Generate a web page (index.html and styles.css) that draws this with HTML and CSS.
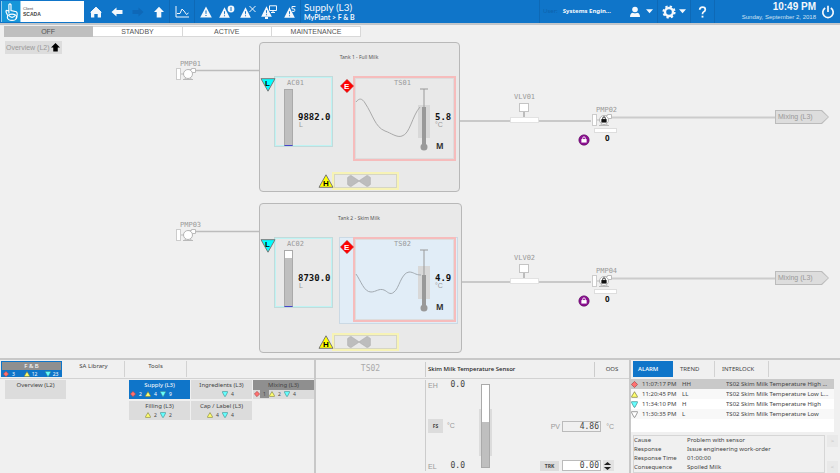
FILE: index.html
```html
<!DOCTYPE html>
<html lang="en">
<head>
<meta charset="utf-8">
<title>Supply (L3)</title>
<link rel="stylesheet" href="styles.css">
</head>
<body>
<svg class="defs" aria-hidden="true">
  <symbol id="hi" viewBox="0 0 10 10"><path d="M5 .6 9.4 5 5 9.4 .6 5z" fill="#ff7070" stroke="#a04848"/></symbol>
  <symbol id="mid" viewBox="0 0 10 10"><path d="M5 1 9 7.6V9H1V7.6z" fill="#ffff70" stroke="#77773c"/></symbol>
  <symbol id="low" viewBox="0 0 10 10"><path d="M.8 1h8.4v1.2L5.6 9H4.4L.8 2.2z" fill="#66ffff" stroke="#3c8888"/></symbol>
  <symbol id="off" viewBox="0 0 10 10"><path d="M.8 1h8.4v1.2L5.6 9H4.4L.8 2.2z" fill="#fff" stroke="#777"/></symbol>
  <symbol id="warn" viewBox="0 0 12 12"><path d="M6 .4 11.8 11.600H.2z" fill="#f4f8fc"/><path d="M5.400 4.500h1.200L6.400 8H5.600zM5.400 8.900h1.200v1.100H5.400z" fill="#1173c5"/></symbol>
  <symbol id="pump" viewBox="0 0 21 14">
    <path d="M7 12.500h10M8.500 12.500l2-3M15.500 12.500l-2-3" stroke="#b9b9b9" fill="none"/>
    <rect x=".5" y="1.500" width="4" height="11" fill="#fff" stroke="#ccc"/>
    <path d="M5 7h3" stroke="#bbb"/>
    <path d="M12 2.500h3.500v-1h4v4H16" fill="#fff" stroke="#bbb"/>
    <circle cx="12" cy="7" r="4.500" fill="#fff" stroke="#b5b5b5"/>
  </symbol>
  <symbol id="blades" viewBox="0 0 24 12"><path d="M.6 2.500Q2.500.6 4 .4L12 5.800 20 .4Q21.500.6 23.400 2.500v7Q21.500 11.400 20 11.600L12 6.200 4 11.600Q2.500 11.400.6 9.500z" fill="#bdbdbd" stroke="#a8a8a8" stroke-width=".5"/></symbol>
  <symbol id="lock" viewBox="0 0 8 8"><path d="M2.500 4V2.500a1.500 1.500 0 0 1 3 0V4" fill="none" stroke="currentColor"/><rect x="1" y="3.500" width="6" height="4" fill="currentColor"/></symbol>
  <symbol id="caret" viewBox="0 0 8 5"><path d="M0 0h8L4 4.500z" fill="#f4f8fc"/></symbol>
  <symbol id="shape-l" viewBox="0 0 16 14"><path d="M1 .7h14L8 13.200z" fill="#0ff" stroke="#777"/></symbol>
  <symbol id="shape-e" viewBox="0 0 14 14"><path d="M7 .3 13.700 7 7 13.700.3 7z" fill="#f00" stroke="#a55" stroke-width=".5"/></symbol>
  <symbol id="shape-h" viewBox="0 0 16 14"><path d="M8 .8 15 13.300H1z" fill="#ff0" stroke="#777"/></symbol>
</svg>

<header class="topbar">
  <div class="brand">
    <svg class="brand-mark" viewBox="0 0 18 20" aria-hidden="true"><rect width="18" height="20" fill="#1696d9"/><g fill="none" stroke="#fff" stroke-width="1.100"><path d="M7 12V3.500Q8 2 9 3.500V9l5 1.200Q15.500 11 14.500 15l-1 2M7 9.500 4.500 9Q3.500 10 6 14"/><ellipse cx="10" cy="15.500" rx="4.500" ry="3"/><path d="M7 14q3 3 6 0"/></g></svg>
    <p class="brand-name"><span>Client</span><strong>SCADA</strong></p>
  </div>
  <nav class="tools" aria-label="Main">
    <button class="tool" aria-label="Home"><svg viewBox="0 0 12 12"><path d="M6 1 1 6v5.500h3.300V8h3.400v3.500H11V6z" fill="#f4f8fc"/><path d="M.6 6.400 6 1.200l5.400 5.200" stroke="#f4f8fc" fill="none"/></svg></button>
    <button class="tool" aria-label="Back"><svg viewBox="0 0 12 12"><path d="M.5 6 5.500 1.500V4h6v4h-6v2.500z" fill="#f4f8fc"/></svg></button>
    <button class="tool" aria-label="Forward"><svg viewBox="0 0 12 12"><path d="M11.500 6 6.500 1.500V4h-6v4h6v2.500z" fill="#0e68b8"/></svg></button>
    <button class="tool" aria-label="Up"><svg viewBox="0 0 12 12"><path d="M6 .8 11 6H8.300v5.500H3.700V6H1z" fill="#f4f8fc"/></svg></button>
    <button class="tool tool-trend" aria-label="Trends"><svg class="wide" viewBox="0 0 14 12"><path d="M1 0v11h13M2 7.500h3l2-4.500 2 2 2.500 3.500 2-1.500" fill="none" stroke="#f4f8fc"/></svg></button>
    <button class="tool" aria-label="Alarms"><svg viewBox="0 0 12 12"><use href="#warn"/></svg></button>
    <button class="tool" aria-label="Alarm information"><svg class="xwide" viewBox="0 0 16 14"><use href="#warn" x="0" y="2" width="11" height="11"/><circle cx="12" cy="4" r="3.400" fill="#f4f8fc"/><path d="M12 2v4" stroke="#1173c5"/></svg></button>
    <button class="tool" aria-label="Suppressed alarms"><svg class="xwide" viewBox="0 0 16 14"><use href="#warn" x="0" y="2" width="11" height="11"/><path d="m9.500 1 6 6m0-6-6 6" stroke="#f4f8fc"/></svg></button>
    <button class="tool" aria-label="System alarms"><svg class="xwide" viewBox="0 0 16 14"><use href="#warn" x="0" y="1" width="11" height="11"/><path d="M4 13h3" stroke="#f4f8fc" stroke-width="2"/><path d="M8.500 .8h7v4.700h-7zM12 5.500v2M10 7.500h4" fill="none" stroke="#f4f8fc"/></svg></button>
    <button class="tool" aria-label="Alarm priorities"><svg class="xwide" viewBox="0 0 16 14"><use href="#warn" x="2" y="2" width="11" height="11"/><path d="M13.500 1.500H10v2.300q3.500-.5 3 1.700-.5 1.500-3 .8" fill="none" stroke="#f4f8fc"/></svg></button>
  </nav>
  <div class="place"><h1>Supply (L3)</h1><p>MyPlant &gt; F &amp; B</p></div>
  <div class="session">
    <p class="user"><span>User:</span><b>Systems Engin...</b></p>
    <button class="menu menu-user" aria-label="Account"><svg class="i12" viewBox="0 0 12 12"><circle cx="6" cy="3.500" r="2.800" fill="#f4f8fc"/><path d="M1 11Q1 7 4 6.800q2 1 4 0Q11 7 11 11z" fill="#f4f8fc"/></svg><svg class="caret"><use href="#caret"/></svg></button>
    <button class="menu" aria-label="Settings"><svg class="i14" viewBox="0 0 14 14"><circle cx="7" cy="7" r="4" fill="none" stroke="#f4f8fc" stroke-width="2.400"/><circle cx="7" cy="7" r="5.600" fill="none" stroke="#f4f8fc" stroke-width="2" stroke-dasharray="2.300 2.100"/></svg><svg class="caret"><use href="#caret"/></svg></button>
    <button class="menu menu-help" aria-label="Help"><svg class="i14" viewBox="0 0 14 14"><path d="M4 4.500Q4 1.800 7 1.800t3 2.500Q10 6 8 7 7 7.500 7 9.500" fill="none" stroke="#f4f8fc" stroke-width="1.900"/><rect x="6" y="11" width="2" height="2" fill="#f4f8fc"/></svg></button>
    <p class="clock"><time class="time">10:49 PM</time><time class="date">Sunday, September 2, 2018</time></p>
    <button class="menu menu-power" aria-label="Log off"><svg class="i14" viewBox="0 0 14 14"><path d="M4.200 3a5.200 5.200 0 1 0 5.600 0M7 .8V7" fill="none" stroke="#f4f8fc" stroke-width="1.700"/></svg></button>
  </div>
</header>

<main class="process">
  <nav class="modes" aria-label="Mode">
    <button class="mode is-on">OFF</button><button class="mode">STANDBY</button><button class="mode">ACTIVE</button><button class="mode">MAINTENANCE</button>
  </nav>
  <a class="up-link" href="#">Overview (L2)<svg viewBox="0 0 10 10" aria-hidden="true"><path d="M5 0l5 5H7.500v4.500h-5V5H0z"/></svg></a>

  <section class="line line-1" aria-label="Full milk line">
    <svg class="pipes" viewBox="0 0 640 160" aria-hidden="true"><g fill="none" stroke="#bcbcbc" stroke-width="1.500"><path d="M20 28.500H84"/><path d="M283 79h53M362 79h54"/><path d="M435 75.500h165" stroke="#ccc" stroke-width="2"/></g></svg>
    <span class="tag pump-in-tag">PMP01</span>
    <svg class="pump pump-in" aria-hidden="true"><use href="#pump"/></svg>
    <article class="tank">
      <h2>Tank 1 - Full Milk</h2>
      <div class="level">
        <span class="tag">AC01</span>
        <div class="bar"><div class="bar-fill" style="height:100%"></div></div>
        <b class="value">9882.0</b><span class="unit">L</span>
      </div>
      <svg class="flag flag-l" viewBox="0 0 16 14"><use href="#shape-l"/><text x="5" y="8">L</text></svg>
      <div class="sensor">
        <span class="tag">TS01</span>
        <svg class="plot" viewBox="0 0 102 84" aria-hidden="true">
          <rect x="65" y="28" width="12" height="33" fill="#d8d8d8"/>
          <path d="M3 25C6 21 9 21 12 26C20 38 22 50 32 54C38 56 44 61 49 59C57 57 59 39 67 30" fill="none" stroke="#a9a9a9"/>
          <path d="M67 12h8M71 12v20" stroke="#999" fill="none"/><path d="M71 30v40" stroke="#999" stroke-width="4"/><circle cx="71" cy="70" r="3.500" fill="#999"/>
        </svg>
        <b class="value">5.8</b><span class="unit">°C</span><b class="manual">M</b>
      </div>
      <svg class="flag flag-e" viewBox="0 0 14 14"><use href="#shape-e"/><text x="4" y="10">E</text></svg>
      <div class="mixer"><svg aria-hidden="true"><use href="#blades"/></svg></div>
      <svg class="flag flag-h" viewBox="0 0 16 14"><use href="#shape-h"/><text x="5" y="12">H</text></svg>
    </article>
    <span class="tag valve-tag">VLV01</span>
    <svg class="valve" viewBox="0 0 30 20" aria-hidden="true"><path d="M14 9v6" stroke="#888"/><rect x="9.500" y=".5" width="9" height="8" fill="#fff" stroke="#c4c4c4"/><rect x=".5" y="14.500" width="28" height="5" fill="#fff" stroke="#e2e2e2"/></svg>
    <span class="tag pump-out-tag">PMP02</span>
    <svg class="pump pump-out" aria-hidden="true"><use href="#pump"/><use href="#lock" x="8.500" y="3" width="7" height="7"/></svg>
    <svg class="interlock" viewBox="0 0 12 12" aria-hidden="true"><circle cx="6" cy="6" r="5.200" fill="#8b1090" stroke="#5d0a60" stroke-width=".6"/><use href="#lock" x="2.500" y="2" width="7" height="7"/></svg>
    <div class="speed"></div><b class="speed-value">0</b>
    <a class="next" href="#">Mixing (L3)</a>
  </section>

  <section class="line line-2" aria-label="Skim milk line">
    <svg class="pipes" viewBox="0 0 640 160" aria-hidden="true"><g fill="none" stroke="#bcbcbc" stroke-width="1.500"><path d="M20 28.500H84"/><path d="M285 79h51M362 79h54"/><path d="M435 75.500h165" stroke="#ccc" stroke-width="2"/></g></svg>
    <span class="tag pump-in-tag">PMP03</span>
    <svg class="pump pump-in" aria-hidden="true"><use href="#pump"/></svg>
    <article class="tank tank-wide">
      <h2>Tank 2 - Skim Milk</h2>
      <div class="level">
        <span class="tag">AC02</span>
        <div class="bar"><div class="bar-fill" style="height:87%"></div></div>
        <b class="value">8730.0</b><span class="unit">L</span>
      </div>
      <svg class="flag flag-l" viewBox="0 0 16 14"><use href="#shape-l"/><text x="5" y="8">L</text></svg>
      <div class="selection"></div>
      <div class="sensor">
        <span class="tag">TS02</span>
        <svg class="plot" viewBox="0 0 102 84" aria-hidden="true">
          <rect x="65" y="28" width="12" height="33" fill="#d8d8d8"/>
          <path d="M3 36C8 43 11 54 18 54C23 54 26 50 31 52C34 53 37 58 41 54C46 51 48 35 56 34C61 34 62 37 68 37" fill="none" stroke="#a3abb2"/>
          <path d="M67 12h8M71 12v26" stroke="#999" fill="none"/><path d="M71 37v33" stroke="#999" stroke-width="4"/><circle cx="71" cy="70" r="3.500" fill="#999"/>
        </svg>
        <b class="value">4.9</b><span class="unit">°C</span><b class="manual">M</b>
      </div>
      <svg class="flag flag-e" viewBox="0 0 14 14"><use href="#shape-e"/><text x="4" y="10">E</text></svg>
      <div class="mixer"><svg aria-hidden="true"><use href="#blades"/></svg></div>
      <svg class="flag flag-h" viewBox="0 0 16 14"><use href="#shape-h"/><text x="5" y="12">H</text></svg>
    </article>
    <span class="tag valve-tag">VLV02</span>
    <svg class="valve" viewBox="0 0 30 20" aria-hidden="true"><path d="M14 9v6" stroke="#888"/><rect x="9.500" y=".5" width="9" height="8" fill="#fff" stroke="#c4c4c4"/><rect x=".5" y="14.500" width="28" height="5" fill="#fff" stroke="#e2e2e2"/></svg>
    <span class="tag pump-out-tag">PMP04</span>
    <svg class="pump pump-out" aria-hidden="true"><use href="#pump"/><use href="#lock" x="8.500" y="3" width="7" height="7"/></svg>
    <svg class="interlock" viewBox="0 0 12 12" aria-hidden="true"><circle cx="6" cy="6" r="5.200" fill="#8b1090" stroke="#5d0a60" stroke-width=".6"/><use href="#lock" x="2.500" y="2" width="7" height="7"/></svg>
    <div class="speed"></div><b class="speed-value">0</b>
    <a class="next" href="#">Mixing (L3)</a>
  </section>
</main>

<footer class="panels">
  <section class="panel areas">
    <nav class="bar-row area-tabs" aria-label="Areas">
      <button class="area is-current"><span class="area-name">F &amp; B</span><span class="counts"><svg><use href="#hi"/></svg><i>3</i><svg><use href="#mid"/></svg><i>12</i><svg><use href="#low"/></svg><i>23</i></span></button>
      <button class="area">SA Library</button>
      <button class="area">Tools</button>
    </nav>
    <div class="tiles">
      <button class="tile"><span class="tile-name">Overview (L2)</span></button>
      <button class="tile is-current c3"><span class="tile-name">Supply (L3)</span><span class="counts"><svg><use href="#hi"/></svg><i>2</i><svg><use href="#mid"/></svg><i>4</i><svg><use href="#low"/></svg><i>9</i></span></button>
      <button class="tile"><span class="tile-name">Ingredients (L3)</span><span class="counts"><svg class="c-low"><use href="#low"/></svg><i>4</i></span></button>
      <button class="tile is-hot"><span class="tile-name">Mixing (L3)</span><span class="counts"><svg><use href="#hi"/></svg><i class="hot">1</i><svg><use href="#mid"/></svg><i>2</i><svg><use href="#low"/></svg><i>4</i></span></button>
      <button class="tile c3"><span class="tile-name">Filling (L3)</span><span class="counts"><svg class="c-mid"><use href="#mid"/></svg><i>2</i><svg><use href="#low"/></svg><i>2</i></span></button>
      <button class="tile"><span class="tile-name">Cap / Label (L3)</span><span class="counts"><svg class="c-mid"><use href="#mid"/></svg><i>4</i><svg><use href="#low"/></svg><i>4</i></span></button>
    </div>
  </section>

  <section class="panel detail">
    <header class="bar-row detail-head"><span class="detail-tag">TS02</span><h2>Skim Milk Temperature Sensor</h2><span class="oos">OOS</span></header>
    <div class="detail-body">
      <div class="limits">
        <p><span>EH</span><output>0.0</output></p>
        <p><button class="chip">FS</button><span class="dim">°C</span></p>
        <p><span>EL</span><output>0.0</output></p>
      </div>
      <div class="gauge"><div class="gauge-tube"><div class="gauge-fill" style="height:55%"></div></div></div>
      <div class="fields">
        <label class="dim" for="pv">PV</label><input id="pv" value="4.86" readonly><span class="dim">°C</span>
        <button class="chip trk">TRK</button><input class="trk-value" aria-label="Track value" value="0.00"><button class="spin" aria-label="Step"><svg viewBox="0 0 10 10"><path d="M1 4 5 .5 9 4zM1 6l4 3.500L9 6z" fill="#222"/></svg></button>
      </div>
    </div>
  </section>

  <section class="panel alarms">
    <nav class="bar-row alarm-tabs"><button class="atab is-current">ALARM</button><button class="atab">TREND</button><button class="atab atab-wide">INTERLOCK</button></nav>
    <div class="alarm-list">
      <table>
        <tr class="picked"><td class="ico"><svg><use href="#hi"/></svg></td><td class="when">11:07:17 PM</td><td class="lvl">HH</td><td>TS02 Skim Milk Temperature High ...</td></tr>
        <tr><td class="ico"><svg><use href="#mid"/></svg></td><td class="when">11:20:45 PM</td><td class="lvl">LL</td><td>TS02 Skim Milk Temperature Low L...</td></tr>
        <tr><td class="ico"><svg><use href="#low"/></svg></td><td class="when">11:34:10 PM</td><td class="lvl">H</td><td>TS02 Skim Milk Temperature High</td></tr>
        <tr><td class="ico"><svg><use href="#off"/></svg></td><td class="when">11:30:35 PM</td><td class="lvl">L</td><td>TS02 Skim Milk Temperature Low</td></tr>
      </table>
    </div>
    <div class="advice">
      <dl><dt>Cause</dt><dd>Problem with sensor</dd><dt>Response</dt><dd>Issue engineering work-order</dd><dt>Response Time</dt><dd>01:00:00</dd><dt>Consequence</dt><dd>Spoiled Milk</dd></dl>
      <div class="pager"><button>&gt;</button><button>&lt;</button></div>
    </div>
  </section>
</footer>
</body>
</html>
```
FILE: styles.css
```css
* { box-sizing: border-box; margin: 0; padding: 0; }
body {
  min-height: 100vh;
  display: flex;
  flex-direction: column;
  background: #f0f0f0;
  color: #444;
  font: 7px/9px Lato, "Liberation Sans", sans-serif;
}
button, input { font: inherit; color: inherit; border: 0; background: none; border-radius: 0; }
button { cursor: pointer; }
a { color: inherit; text-decoration: none; }
svg { display: block; }
i { font-style: normal; }
.defs { position: absolute; width: 0; height: 0; }

/* top bar */
.topbar {
  display: flex;
  align-items: stretch;
  height: 25px;
  background: #0f75c9;
  border-bottom: 2px solid #c2c6ca;
  color: #f4f8fc;
}
.brand { display: flex; width: 83px; margin: 1px; background: #fff; }
.brand-mark { width: 20px; height: 21px; }
.brand-name { display: flex; flex-direction: column; justify-content: center; padding-left: 2px; color: #444; font: 5px/7px "Liberation Sans", sans-serif; }
.brand-name span { font-size: 4px; line-height: 5px; }
.tools { display: flex; }
.tool { display: flex; align-items: center; justify-content: center; width: 21px; }
.tool svg { width: 12px; height: 12px; flex: none; }
.tool .wide { width: 14px; height: 12px; }
.tool .xwide { width: 16px; height: 14px; }
.tool-trend { width: 26px; border: solid #0e69b6; border-width: 0 1px; }
.place { padding: 1px 0 0 3px; border-left: 1px solid #0e69b6; }
.place h1 { font-size: 10px; line-height: 12px; font-weight: 400; }
.place p { font-weight: 700; line-height: 8px; }
.session { display: flex; align-items: stretch; margin-left: auto; }
.user { display: flex; align-items: center; gap: 5px; padding-left: 3px; width: 86px; border-left: 1px solid #0e69b6; font: 6px/9px "Noto Sans", sans-serif; }
.user span { color: #0d62ab; }
.menu { display: flex; align-items: center; justify-content: space-between; width: 33px; padding: 0 4px; border-right: 1px solid #0e69b6; }
.menu-help { width: 24px; padding: 0 5px; }
.menu-power { width: 24px; padding: 0 5px; border: 0; }
.i12 { width: 12px; height: 12px; }
.i14 { width: 14px; height: 14px; }
.caret { width: 7px; height: 5px; }
.clock { width: 101px; display: flex; flex-direction: column; text-align: right; padding-top: 1px; font-family: "Liberation Sans", sans-serif; }
.time { font-size: 10px; line-height: 11px; font-weight: 700; }
.date { font-size: 6px; line-height: 10px; color: #cfe2f3; }

/* process canvas */
.process { position: relative; height: 333px; overflow: hidden; font-family: "Liberation Sans", sans-serif; }
.modes { display: grid; grid-template-columns: repeat(4, 1fr); width: 43%; padding: 1px 0 0 4px; }
.mode { height: 11px; background: #fff; border: 1px solid #d8d8d8; border-left-width: 0; color: #555; line-height: 9px; }
.mode.is-on { background: #bfbfbf; border-color: #bfbfbf; }
.up-link { display: inline-flex; align-items: center; gap: 1px; height: 13px; margin: 4px 0 0 5px; padding: 0 2px 0 1px; background: #ddd; color: #999; }
.up-link svg { width: 9px; height: 9px; fill: #000; }
.line { position: absolute; left: 175px; width: 665px; height: 160px; }
.line-1 { top: 17px; }
.line-2 { top: 178px; }
.line > *, .tank > *, .level > *, .sensor > * { position: absolute; }
.pipes { left: 0; top: 0; width: 640px; height: 160px; }
.tag { font: 7px/8px "DejaVu Sans Mono", monospace; color: #999; }
.pump { width: 21px; height: 14px; color: #111; }
.pump-in { left: 1px; top: 25px; }
.pump-in-tag { left: 5px; top: 18px; }
.tank { left: 84px; top: 0; width: 201px; height: 150px; background: #e9e9e9; border: 1px solid #b8b8b8; border-radius: 4px; }
.tank-wide { width: 203px; }
.tank h2 { width: 198px; top: 10px; text-align: center; font: 5px/8px "Noto Sans", sans-serif; color: #555; }
.level { left: 14px; top: 33px; width: 59px; height: 71px; border: 1px solid #c3dada; box-shadow: inset 0 0 0 1px #bff3f3; }
.level .tag { left: 12px; top: 2px; }
.bar { left: 9px; top: 12px; width: 9px; height: 57px; display: flex; align-items: flex-end; background: #fff; border: 1px solid #aaa; border-bottom-color: #44c; }
.bar-fill { width: 100%; background: #bfbfbf; }
.value { font: 700 9px/10px "DejaVu Sans Mono", monospace; color: #111; }
.unit { color: #999; line-height: 8px; }
.level .value { left: 23px; top: 35px; }
.level .unit { left: 24px; top: 44px; }
.sensor { left: 93px; top: 33px; width: 103px; height: 85px; border: 2px solid #f6bcbc; outline: 1px solid #ddd; outline-offset: -3px; }
.sensor .tag { left: 39px; top: 1px; }
.plot { left: -2px; top: -1px; width: 102px; height: 84px; }
.sensor .value { left: 80px; top: 34px; }
.sensor .unit { left: 80px; top: 43px; }
.manual { left: 81px; top: 63px; font: 700 8px/10px "Noto Sans", sans-serif; color: #333; }
.selection { left: 79px; top: 33px; width: 119px; height: 87px; background: #e1edf7; border: 1px solid #cbd9e4; }
.mixer { left: 72px; top: 129px; width: 67px; height: 18px; padding: 1px 0 0 13px; border: 2px solid #f7f3b6; outline: 1px solid #d6d6c4; outline-offset: -3px; }
.mixer svg { width: 24px; height: 12px; }
.flag { width: 16px; height: 14px; font: 700 8px "Liberation Sans", sans-serif; }
.flag-l { left: 0; top: 35px; }
.flag-e { left: 80px; top: 36px; width: 14px; fill: #fff; }
.flag-h { left: 58px; top: 131px; }
.valve-tag { left: 339px; top: 51px; }
.valve { left: 335px; top: 61px; width: 30px; height: 20px; }
.pump-out { left: 417px; top: 71px; }
.pump-out-tag { left: 421px; top: 64px; }
.interlock { left: 403px; top: 92px; width: 12px; height: 12px; color: #fff; }
.speed { left: 419px; top: 86px; width: 23px; height: 5px; background: #fff; border: 1px solid #ddd; }
.speed-value { left: 430px; top: 91px; font: 700 8px/10px "Noto Sans", sans-serif; color: #111; }
.next { left: 600px; top: 68px; width: 54px; height: 14px; padding-left: 3px; line-height: 14px; background: #bbb; color: #999; clip-path: polygon(0 0, 87% 0, 100% 50%, 87% 100%, 0 100%); isolation: isolate; }
.next::before { content: ""; position: absolute; z-index: -1; inset: 1px; background: #ddd; clip-path: polygon(0 0, 87% 0, 100% 50%, 87% 100%, 0 100%); }

/* bottom panels */
.panels { flex: 1; display: grid; grid-template-columns: 316fr 315fr 209fr; border-top: 2px solid #c8c8c8; font: 6px/9px "Noto Sans", sans-serif; }
.panel { min-width: 0; border-right: 2px solid #c8c8c8; }
.panel:last-child { border-right: 0; }
.bar-row { display: flex; height: 19px; border-bottom: 1px solid #d2d2d2; }
.area { width: 62px; height: 16px; margin-top: 1px; border-right: 1px solid #d2d2d2; line-height: 10px; display: flex; justify-content: center; }
.area.is-current { width: 61px; margin-left: 1px; margin-right: 1px; padding: 1px; flex-direction: column; background: #0f75c9; color: #fff; border: 0; }
.area-name { background: #8f8f8f; line-height: 8px; }
.counts { display: grid; grid-template-columns: 6px 9px 6px 9px 6px 9px; gap: 0; align-items: center; height: 8px; font-size: 5px; line-height: 8px; text-align: center; padding-left: 1px; }
.counts svg { width: 6px; height: 6px; }
.area .counts { height: 7px; grid-template-columns: 6px 9px 12px 9px 12px 9px; }
.area .counts svg { justify-self: end; }
.area .counts svg:first-child { justify-self: start; }
.c-mid { grid-column: 3; }
.c-low { grid-column: 5; }
.tiles { display: grid; grid-template-columns: repeat(5, 1fr); gap: 2px 1px; padding: 1px 0 0 5px; }
.tile { height: 19px; display: flex; flex-direction: column; background: #dcdcdc; text-align: center; }
.tile.is-current { background: #0f75c9; color: #fff; }
.tile-name { width: 100%; line-height: 10px; }
.is-hot .tile-name { background: #8f8f8f; }
.hot { background: #8f8f8f; }
.c3 { grid-column: 3; }

.detail-head { align-items: center; }
.detail-tag { width: 109px; text-align: center; font: 8px/10px "DejaVu Sans Mono", monospace; color: #aaa; }
.detail h2 { flex: 1; height: 15px; padding-left: 2px; border-left: 1px solid #ccc; font-size: 6px; line-height: 15px; font-weight: 500; color: #222; }
.oos { width: 35px; height: 15px; border-left: 1px solid #ccc; text-align: center; line-height: 15px; }
.detail-body { display: grid; grid-template-columns: 40px 28px 1fr; column-gap: 14px; margin: 1px 15px 0 109px; }
.limits { display: flex; flex-direction: column; justify-content: space-between; height: 91px; padding-left: 2px; border-left: 1px solid #ccc; font: 7px/9px "Liberation Sans", sans-serif; color: #999; }
.limits p { display: flex; justify-content: space-between; align-items: center; }
.limits .dim { flex: 1; padding-left: 4px; }
.limits output { font: 8px/10px "DejaVu Sans Mono", monospace; color: #444; }
.dim { color: #999; font: 7px/9px "Liberation Sans", sans-serif; }
.chip { width: 15px; height: 14px; background: #dcdcdc; font: 700 5px/8px "Noto Sans", sans-serif; color: #444; text-align: center; }
.gauge { display: flex; justify-content: center; height: 84px; margin-top: 4px; width: 13px; background: linear-gradient(#dcdcdc, #dcdcdc) 0 25px / 13px 47px no-repeat; }
.gauge-tube { width: 9px; display: flex; align-items: flex-end; background: #fff; border: 1px solid #aaa; }
.gauge-fill { width: 100%; background: #bfbfbf; }
.fields { display: grid; grid-template-columns: 20px 39px 11px; column-gap: 2px; row-gap: 28px; justify-content: end; align-content: end; align-items: center; text-align: right; }
.fields input { width: 100%; height: 11px; padding-right: 1px; border: 1px solid #bbb; font: 8px/9px "DejaVu Sans Mono", monospace; text-align: right; background: #f0f0f0; }
.fields .trk-value { background: #fff; }
.trk { width: 19px; height: 10px; }
.spin { height: 11px; background: #e2e2e2; }
.spin svg { width: 9px; height: 10px; }

.alarm-tabs { padding: 1px 0 0 2px; border-bottom: 0; }
.atab { height: 16px; width: 42px; padding-left: 7px; text-align: left; border-right: 1px solid #d2d2d2; }
.atab.is-current { width: 40px; padding-left: 5px; background: #0f75c9; color: #fff; border: 0; font-weight: 500; }
.atab-wide { width: 54px; }
.alarm-list { height: 53px; margin-right: 6px; background: #fff; }
table { width: 100%; border-collapse: collapse; white-space: nowrap; table-layout: fixed; }
tr { height: 10px; background: #fff; }
tr:nth-child(even) { background: #f8f8f8; }
tr.picked { background: #c9c9c9; }
td { line-height: 10px; overflow: hidden; }
.ico { width: 11px; }
.ico svg { width: 7px; height: 7px; }
.when { width: 40px; }
.lvl { width: 44px; }
.advice { display: flex; gap: 2px; margin: 3px 2px 0 2px; }
dl { flex: 1; display: grid; grid-template-columns: 53px 1fr; border: 1px solid #d6d6d6; }
.pager { display: flex; flex-direction: column; justify-content: space-between; }
.pager button { width: 11px; height: 12px; background: #e9e9e9; color: #bbb; }
```
